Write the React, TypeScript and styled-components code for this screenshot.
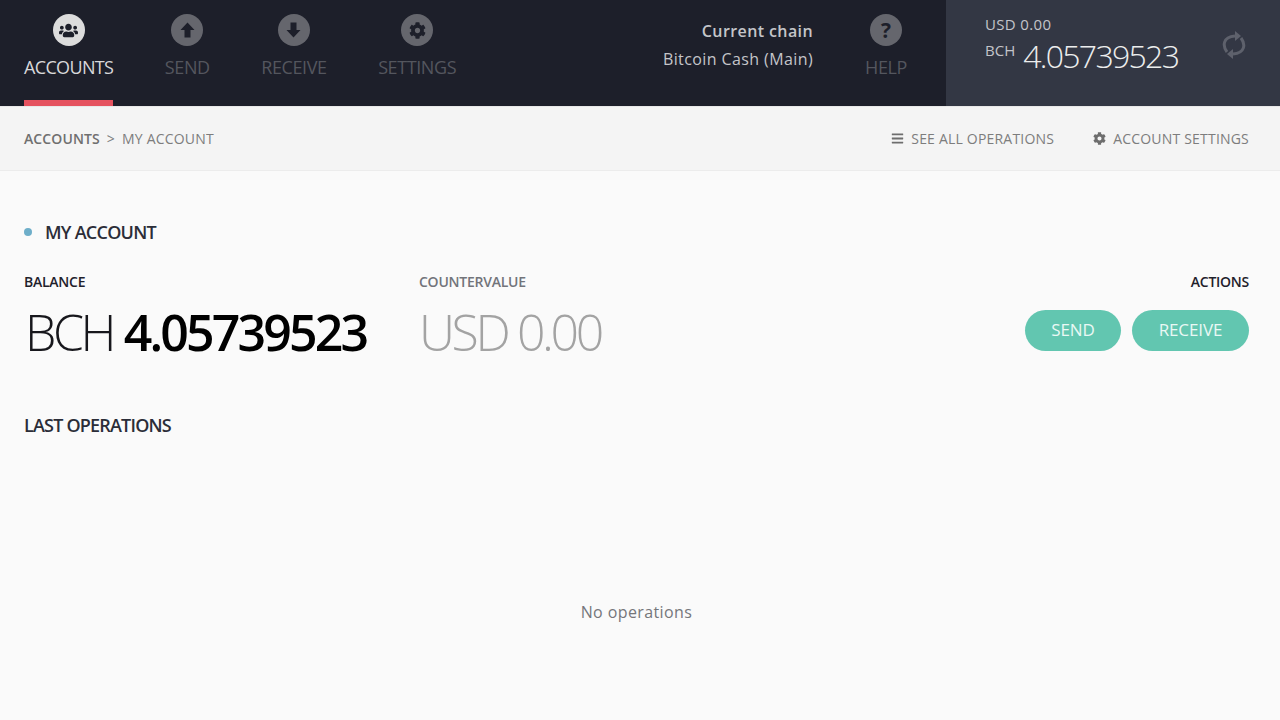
import React from 'react';
import styled, { createGlobalStyle } from 'styled-components';
import { FaBars, FaCog, FaUsers } from 'react-icons/fa';

const GlobalStyle = createGlobalStyle`
  html, body {
    margin: 0;
    padding: 0;
    background: #fafafa;
    font-family: "Open Sans", "Noto Sans", sans-serif;
  }
  * {
    box-sizing: border-box;
  }
`;

const Page = styled.div`
  width: 1280px;
  height: 720px;
  overflow: hidden;
  display: flex;
  flex-direction: column;
  background: #fafafa;
`;

const TopBar = styled.header`
  height: 107px;
  flex-shrink: 0;
  display: flex;
  background: #1d1f2a;
  border-bottom: 1px solid #e8e8e8;
`;

const Nav = styled.nav`
  flex: 1;
  display: flex;
  gap: 51.5px;
  padding-left: 24px;
`;

const NavItem = styled.div<{ $active?: boolean }>`
  height: 106px;
  padding-top: 14px;
  display: flex;
  flex-direction: column;
  align-items: center;
  gap: 7px;
  font-size: 18px;
  line-height: 28px;
  letter-spacing: ${(p) => (p.$active ? '-0.65px' : '-0.4px')};
  color: ${(p) => (p.$active ? '#d8d8da' : '#54565e')};
  border-bottom: 6px solid ${(p) => (p.$active ? '#e5525f' : 'transparent')};
`;

const IconCircle = styled.div<{ $active?: boolean; $size?: number }>`
  width: 32px;
  height: 32px;
  border-radius: 50%;
  display: flex;
  align-items: center;
  justify-content: center;
  font-size: ${(p) => p.$size ?? 16}px;
  color: #1d1f2a;
  background: ${(p) => (p.$active ? '#dcdcdc' : '#65666d')};
`;

const QuestionMark = styled.span`
  font-size: 21px;
  line-height: 32px;
  font-weight: 700;
  letter-spacing: 0;
`;

const Chain = styled.div`
  width: 170px;
  padding-top: 17px;
  margin-left: auto;
  text-align: right;
  font-size: 16px;
  line-height: 28px;
  color: #c4c5c9;
  white-space: nowrap;
  letter-spacing: 0.4px;
`;

const ChainTitle = styled.div`
  font-weight: 600;
`;

const HelpSlot = styled.div`
  width: 133px;
  display: flex;
  justify-content: center;
  padding-left: 13px;
`;

const BalancePanel = styled.div`
  width: 334px;
  display: flex;
  justify-content: space-between;
  background: #333744;
  padding: 12px 34px 0 39px;
`;

const SmallUsd = styled.div`
  font-size: 15px;
  line-height: 24px;
  letter-spacing: 0.35px;
  color: #c3c4c9;
`;

const BchRow = styled.div`
  display: flex;
  align-items: flex-start;
  gap: 8px;
`;

const BchUnit = styled.span`
  padding-top: 1px;
  font-size: 15px;
  line-height: 26px;
  color: #c3c4c9;
`;

const BchValue = styled.span`
  font-size: 32px;
  line-height: 40px;
  font-weight: 300;
  letter-spacing: -1.7px;
  color: #eceded;
`;

const SyncIcon = styled.div`
  padding-top: 18px;
  color: #5e616c;
`;

const SubBar = styled.div`
  height: 64px;
  flex-shrink: 0;
  display: flex;
  align-items: center;
  justify-content: space-between;
  padding: 0 31px 0 24px;
  background: #f4f4f4;
  border-bottom: 1px solid #ececec;
  font-size: 14px;
  letter-spacing: 0.2px;
  color: #7d7d7d;
`;

const Crumbs = styled.div`
  display: flex;
  gap: 7px;
`;

const CrumbRoot = styled.span`
  font-weight: 600;
  letter-spacing: 0.1px;
  color: #6f6f6f;
`;

const SubActions = styled.div`
  display: flex;
  gap: 39px;
`;

const SubAction = styled.div`
  display: flex;
  align-items: center;
  gap: 7px;

  svg {
    font-size: 13px;
    color: #6d6d6d;
  }
`;

const Main = styled.main`
  flex: 1;
  display: flex;
  flex-direction: column;
  padding: 48px 31px 0 24px;
`;

const AccountTitle = styled.div`
  display: flex;
  align-items: center;
  gap: 13px;
  height: 26px;
  font-size: 18px;
  font-weight: 600;
  letter-spacing: -0.75px;
  color: #2b2d38;
`;

const Dot = styled.span`
  width: 8px;
  height: 8px;
  border-radius: 50%;
  background: #6eaec9;
`;

const Figures = styled.div`
  display: flex;
  margin-top: 27px;
`;

const Figure = styled.div`
  width: 395px;
`;

const Label = styled.div<{ $muted?: boolean }>`
  font-size: 14px;
  line-height: 20px;
  font-weight: 600;
  letter-spacing: -0.25px;
  color: ${(p) => (p.$muted ? '#72747a' : '#1f212b')};
`;

const BigAmount = styled.div<{ $muted?: boolean }>`
  margin-top: 12px;
  padding-left: ${(p) => (p.$muted ? '0' : '1px')};
  font-size: 50px;
  line-height: 56px;
  font-weight: 300;
  letter-spacing: -3.4px;
  white-space: nowrap;
  color: ${(p) => (p.$muted ? '#a3a3a3' : '#17171c')};

  b {
    margin-left: 1px;
    font-weight: 600;
    letter-spacing: -2.85px;
    color: #000;
  }
`;

const Actions = styled.div`
  margin-left: auto;
  display: flex;
  flex-direction: column;
  align-items: flex-end;
`;

const Buttons = styled.div`
  display: flex;
  gap: 11px;
  margin-top: 18px;
`;

const PillButton = styled.div<{ $width: number }>`
  width: ${(p) => p.$width}px;
  height: 41px;
  padding-bottom: 2px;
  border-radius: 21px;
  display: flex;
  align-items: center;
  justify-content: center;
  background: #62c6b0;
  color: #e9f8f4;
  font-size: 17px;
  letter-spacing: -0.1px;
`;

const SectionTitle = styled.div`
  margin-top: 52px;
  font-size: 18px;
  line-height: 26px;
  font-weight: 600;
  letter-spacing: -0.8px;
  color: #2b2d38;
`;

const Empty = styled.div`
  margin-top: 162px;
  text-align: center;
  font-size: 16px;
  line-height: 24px;
  letter-spacing: 0.4px;
  color: #75767a;
`;

const ArrowIcon = ({ down }: { down?: boolean }) => (
  <svg width="15" height="16" viewBox="0 0 15 16" fill="currentColor">
    <path d={down ? 'M4.5 0.5h6v7.5h4l-7 7.5l-7-7.5h4z' : 'M7.5 0.5l7 7.5h-4v7.5h-6v-7.5h-4z'} />
  </svg>
);

const RefreshIcon = () => (
  <svg width="24" height="30" viewBox="0 0 24 30" fill="none" stroke="currentColor" strokeWidth="3">
    <path d="M5 22C0.5 16 0.5 7 13 6" />
    <path d="M19 8C23.5 14 23.5 23 11 24" />
    <path d="M13 1l6 5l-6 5z" fill="currentColor" stroke="none" />
    <path d="M11 19l-6 5l6 5z" fill="currentColor" stroke="none" />
  </svg>
);

const navItems = [
  { label: 'ACCOUNTS', icon: <FaUsers />, size: 19, active: true },
  { label: 'SEND', icon: <ArrowIcon /> },
  { label: 'RECEIVE', icon: <ArrowIcon down /> },
  { label: 'SETTINGS', icon: <FaCog />, size: 17 },
];

const App = () => {
  return (
    <Page>
      <GlobalStyle />
      <TopBar>
        <Nav>
          {navItems.map((item) => (
            <NavItem key={item.label} $active={item.active}>
              <IconCircle $active={item.active} $size={item.size}>
                {item.icon}
              </IconCircle>
              {item.label}
            </NavItem>
          ))}
          <Chain>
            <ChainTitle>Current chain</ChainTitle>
            <div>Bitcoin Cash (Main)</div>
          </Chain>
        </Nav>
        <HelpSlot>
          <NavItem>
            <IconCircle>
              <QuestionMark>?</QuestionMark>
            </IconCircle>
            HELP
          </NavItem>
        </HelpSlot>
        <BalancePanel>
          <div>
            <SmallUsd>USD 0.00</SmallUsd>
            <BchRow>
              <BchUnit>BCH</BchUnit>
              <BchValue>4.05739523</BchValue>
            </BchRow>
          </div>
          <SyncIcon>
            <RefreshIcon />
          </SyncIcon>
        </BalancePanel>
      </TopBar>
      <SubBar>
        <Crumbs>
          <CrumbRoot>ACCOUNTS</CrumbRoot>
          <span>&gt;</span>
          <span>MY ACCOUNT</span>
        </Crumbs>
        <SubActions>
          <SubAction>
            <FaBars />
            SEE ALL OPERATIONS
          </SubAction>
          <SubAction>
            <FaCog />
            ACCOUNT SETTINGS
          </SubAction>
        </SubActions>
      </SubBar>
      <Main>
        <AccountTitle>
          <Dot />
          MY ACCOUNT
        </AccountTitle>
        <Figures>
          <Figure>
            <Label>BALANCE</Label>
            <BigAmount>
              BCH <b>4.05739523</b>
            </BigAmount>
          </Figure>
          <Figure>
            <Label $muted>COUNTERVALUE</Label>
            <BigAmount $muted>USD 0.00</BigAmount>
          </Figure>
          <Actions>
            <Label>ACTIONS</Label>
            <Buttons>
              <PillButton $width={96}>SEND</PillButton>
              <PillButton $width={117}>RECEIVE</PillButton>
            </Buttons>
          </Actions>
        </Figures>
        <SectionTitle>LAST OPERATIONS</SectionTitle>
        <Empty>No operations</Empty>
      </Main>
    </Page>
  );
};

export default App;
